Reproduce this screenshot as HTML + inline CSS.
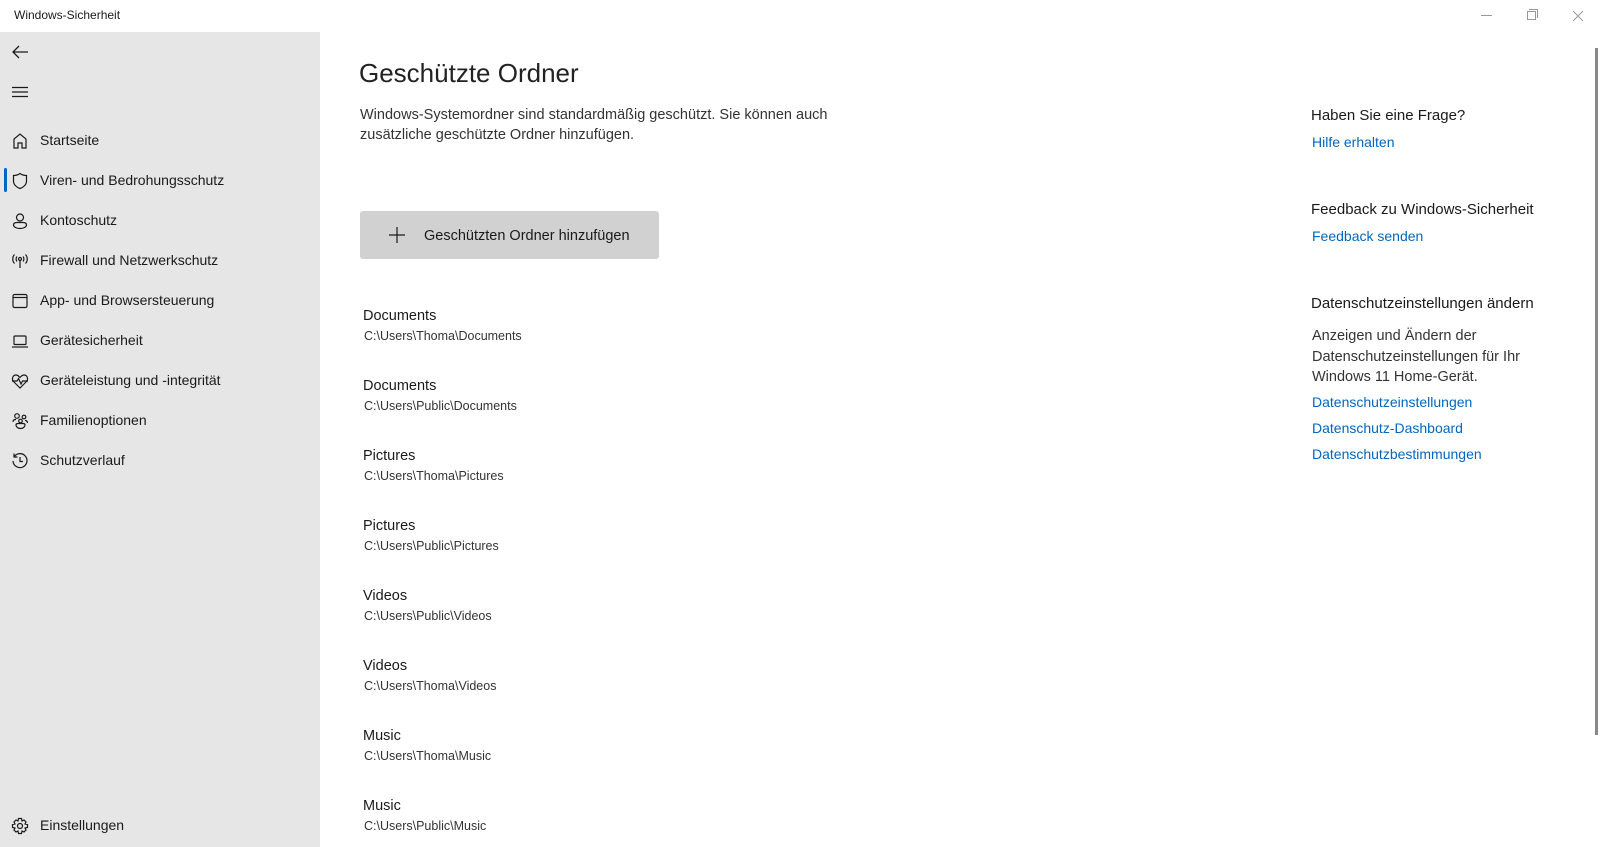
<!DOCTYPE html>
<html><head><meta charset="utf-8"><style>
*{margin:0;padding:0;box-sizing:border-box}
body{width:1600px;height:847px;overflow:hidden;background:#fff;font-family:"Segoe UI","Liberation Sans",sans-serif;color:#1a1a1a;position:relative}
.a{position:absolute;white-space:nowrap}
#side{position:absolute;left:0;top:32px;width:320px;height:815px;background:#e6e6e6}
.nav{font-size:14px;left:40px}
.ic{position:absolute;left:11px;width:18px;height:18px}
.ic svg{width:18px;height:18px;fill:none;stroke:#1a1a1a;stroke-width:1.2}
.nm{font-size:14.5px;left:363px}
.pt{font-size:12.5px;left:364px;color:#333}
.rh{font-size:15px;left:1311px;color:#1a1a1a}
.lk{font-size:14px;left:1312px;color:#0067c0}
.rt{font-size:14.5px;left:1312px;color:#333}
</style></head><body>
<div class="a" style="left:14px;top:8px;font-size:12px">Windows-Sicherheit</div>
<div class="a" style="left:1481px;top:15px;width:11px;border-top:1px solid #999"></div>
<div class="a" style="left:1527px;top:11px;width:9px;height:9px;border:1px solid #999"></div>
<div class="a" style="left:1529px;top:9px;width:9px;height:9px;border-top:1px solid #999;border-right:1px solid #999"></div>
<svg class="a" style="left:1572px;top:10px" width="12" height="12"><path d="M1 1L11 11M11 1L1 11" stroke="#999" stroke-width="1"/></svg>
<div class="a" style="left:1595px;top:48px;width:3px;height:687px;background:#888"></div>

<div id="side"></div>
<svg class="a" style="left:11px;top:43px" width="18" height="18"><path d="M17 9H2M8 3L2 9L8 15" fill="none" stroke="#1a1a1a" stroke-width="1.3"/></svg>
<svg class="a" style="left:11px;top:86px" width="18" height="12"><path d="M1 1.5H17M1 6H17M1 10.5H17" stroke="#1a1a1a" stroke-width="1.2"/></svg>

<div class="ic" style="top:132px"><svg><path d="M3 16V7L9 2L15 7V16H11V11H7V16Z"/></svg></div>
<div class="a nav" style="top:132px">Startseite</div>
<div class="a" style="left:4px;top:168px;width:3px;height:24px;background:#0067c0;border-radius:2px"></div>
<div class="ic" style="top:172px"><svg><path d="M9 1.5C7 3 5 3.5 2.5 3.5V9C2.5 13 6 15.5 9 16.5C12 15.5 15.5 13 15.5 9V3.5C13 3.5 11 3 9 1.5Z"/></svg></div>
<div class="a nav" style="top:172px">Viren- und Bedrohungsschutz</div>
<div class="ic" style="top:212px"><svg><circle cx="9" cy="5.5" r="3.5"/><path d="M2.5 13C2.5 11 4 10.5 6 10.5H12C14 10.5 15.5 11 15.5 13C15.5 15 12.5 16.5 9 16.5C5.5 16.5 2.5 15 2.5 13Z"/></svg></div>
<div class="a nav" style="top:212px">Kontoschutz</div>
<div class="ic" style="top:252px"><svg><circle cx="9" cy="7" r="1.5"/><path d="M9 8.5V16M6 4.5C4.8 5.8 4.8 8.2 6 9.5M12 4.5C13.2 5.8 13.2 8.2 12 9.5M3.5 2.5C1.2 5 1.2 9 3.5 11.5M14.5 2.5C16.8 5 16.8 9 14.5 11.5"/></svg></div>
<div class="a nav" style="top:252px">Firewall und Netzwerkschutz</div>
<div class="ic" style="top:292px"><svg><rect x="2" y="2.5" width="14" height="13" rx="1.5"/><path d="M2 5.5H16"/></svg></div>
<div class="a nav" style="top:292px">App- und Browsersteuerung</div>
<div class="ic" style="top:332px"><svg><rect x="3" y="4" width="12" height="8.5" rx="1"/><path d="M1 15H17"/></svg></div>
<div class="a nav" style="top:332px">Gerätesicherheit</div>
<div class="ic" style="top:372px"><svg><path d="M9 16L2.5 9.5C0.5 7.5 1.5 3 5 3C7 3 8 4.5 9 5.5C10 4.5 11 3 13 3C16.5 3 17.5 7.5 15.5 9.5Z"/><path d="M1 9H6L7.5 6.5L10 12L11.5 9H17"/></svg></div>
<div class="a nav" style="top:372px">Geräteleistung und -integrität</div>
<div class="ic" style="top:412px"><svg><circle cx="6" cy="4" r="2.3"/><circle cx="13" cy="5" r="1.8"/><circle cx="9.5" cy="9" r="1.8"/><path d="M2 10C2 8 3 7.5 5 7.5M14 8.5C16 8.5 16.5 9.5 16.5 11M5 13C5 12 6 11.5 7 11.5H12C13 11.5 14 12 14 13C14 15 12 16.5 9.5 16.5C7 16.5 5 15 5 13Z"/></svg></div>
<div class="a nav" style="top:412px">Familienoptionen</div>
<div class="ic" style="top:452px"><svg><path d="M3 5A7 7 0 1 1 2 9M3 1.5V5H6.5M9 5V9.5H12"/></svg></div>
<div class="a nav" style="top:452px">Schutzverlauf</div>
<div class="ic" style="top:817px"><svg><circle cx="9" cy="9" r="2.5"/><path d="M7.5 1.5H10.5L11 4L13 3L15 5L14 7L16.5 7.5V10.5L14 11L15 13L13 15L11 14L10.5 16.5H7.5L7 14L5 15L3 13L4 11L1.5 10.5V7.5L4 7L3 5L5 3L7 4Z"/></svg></div>
<div class="a nav" style="top:817px">Einstellungen</div>

<div class="a" style="left:359px;top:58px;font-size:26px;color:#222">Geschützte Ordner</div>
<div class="a" style="left:360px;top:105px;font-size:14.5px;line-height:20px;color:#333;white-space:normal;width:500px">Windows-Systemordner sind standardmäßig geschützt. Sie können auch<br>zusätzliche geschützte Ordner hinzufügen.</div>
<div class="a" style="left:360px;top:211px;width:299px;height:48px;background:#d1d1d1;border-radius:3px"></div>
<svg class="a" style="left:389px;top:227px" width="16" height="16"><path d="M8 0V16M0 8H16" stroke="#1a1a1a" stroke-width="1.2"/></svg>
<div class="a" style="left:424px;top:228px;font-size:14.5px">Geschützten Ordner hinzufügen</div>

<div class="a nm" style="top:308px">Documents</div><div class="a pt" style="top:329px">C:\Users\Thoma\Documents</div>
<div class="a nm" style="top:378px">Documents</div><div class="a pt" style="top:399px">C:\Users\Public\Documents</div>
<div class="a nm" style="top:448px">Pictures</div><div class="a pt" style="top:469px">C:\Users\Thoma\Pictures</div>
<div class="a nm" style="top:518px">Pictures</div><div class="a pt" style="top:539px">C:\Users\Public\Pictures</div>
<div class="a nm" style="top:588px">Videos</div><div class="a pt" style="top:609px">C:\Users\Public\Videos</div>
<div class="a nm" style="top:658px">Videos</div><div class="a pt" style="top:679px">C:\Users\Thoma\Videos</div>
<div class="a nm" style="top:728px">Music</div><div class="a pt" style="top:749px">C:\Users\Thoma\Music</div>
<div class="a nm" style="top:798px">Music</div><div class="a pt" style="top:819px">C:\Users\Public\Music</div>

<div class="a rh" style="top:107px">Haben Sie eine Frage?</div>
<div class="a lk" style="top:134px">Hilfe erhalten</div>
<div class="a rh" style="top:201px">Feedback zu Windows-Sicherheit</div>
<div class="a lk" style="top:228px">Feedback senden</div>
<div class="a rh" style="top:295px">Datenschutzeinstellungen ändern</div>
<div class="a rt" style="top:326px;line-height:20.5px">Anzeigen und Ändern der<br>Datenschutzeinstellungen für Ihr<br>Windows 11 Home-Gerät.</div>
<div class="a lk" style="top:394px">Datenschutzeinstellungen</div>
<div class="a lk" style="top:420px">Datenschutz-Dashboard</div>
<div class="a lk" style="top:446px">Datenschutzbestimmungen</div>
</body></html>
